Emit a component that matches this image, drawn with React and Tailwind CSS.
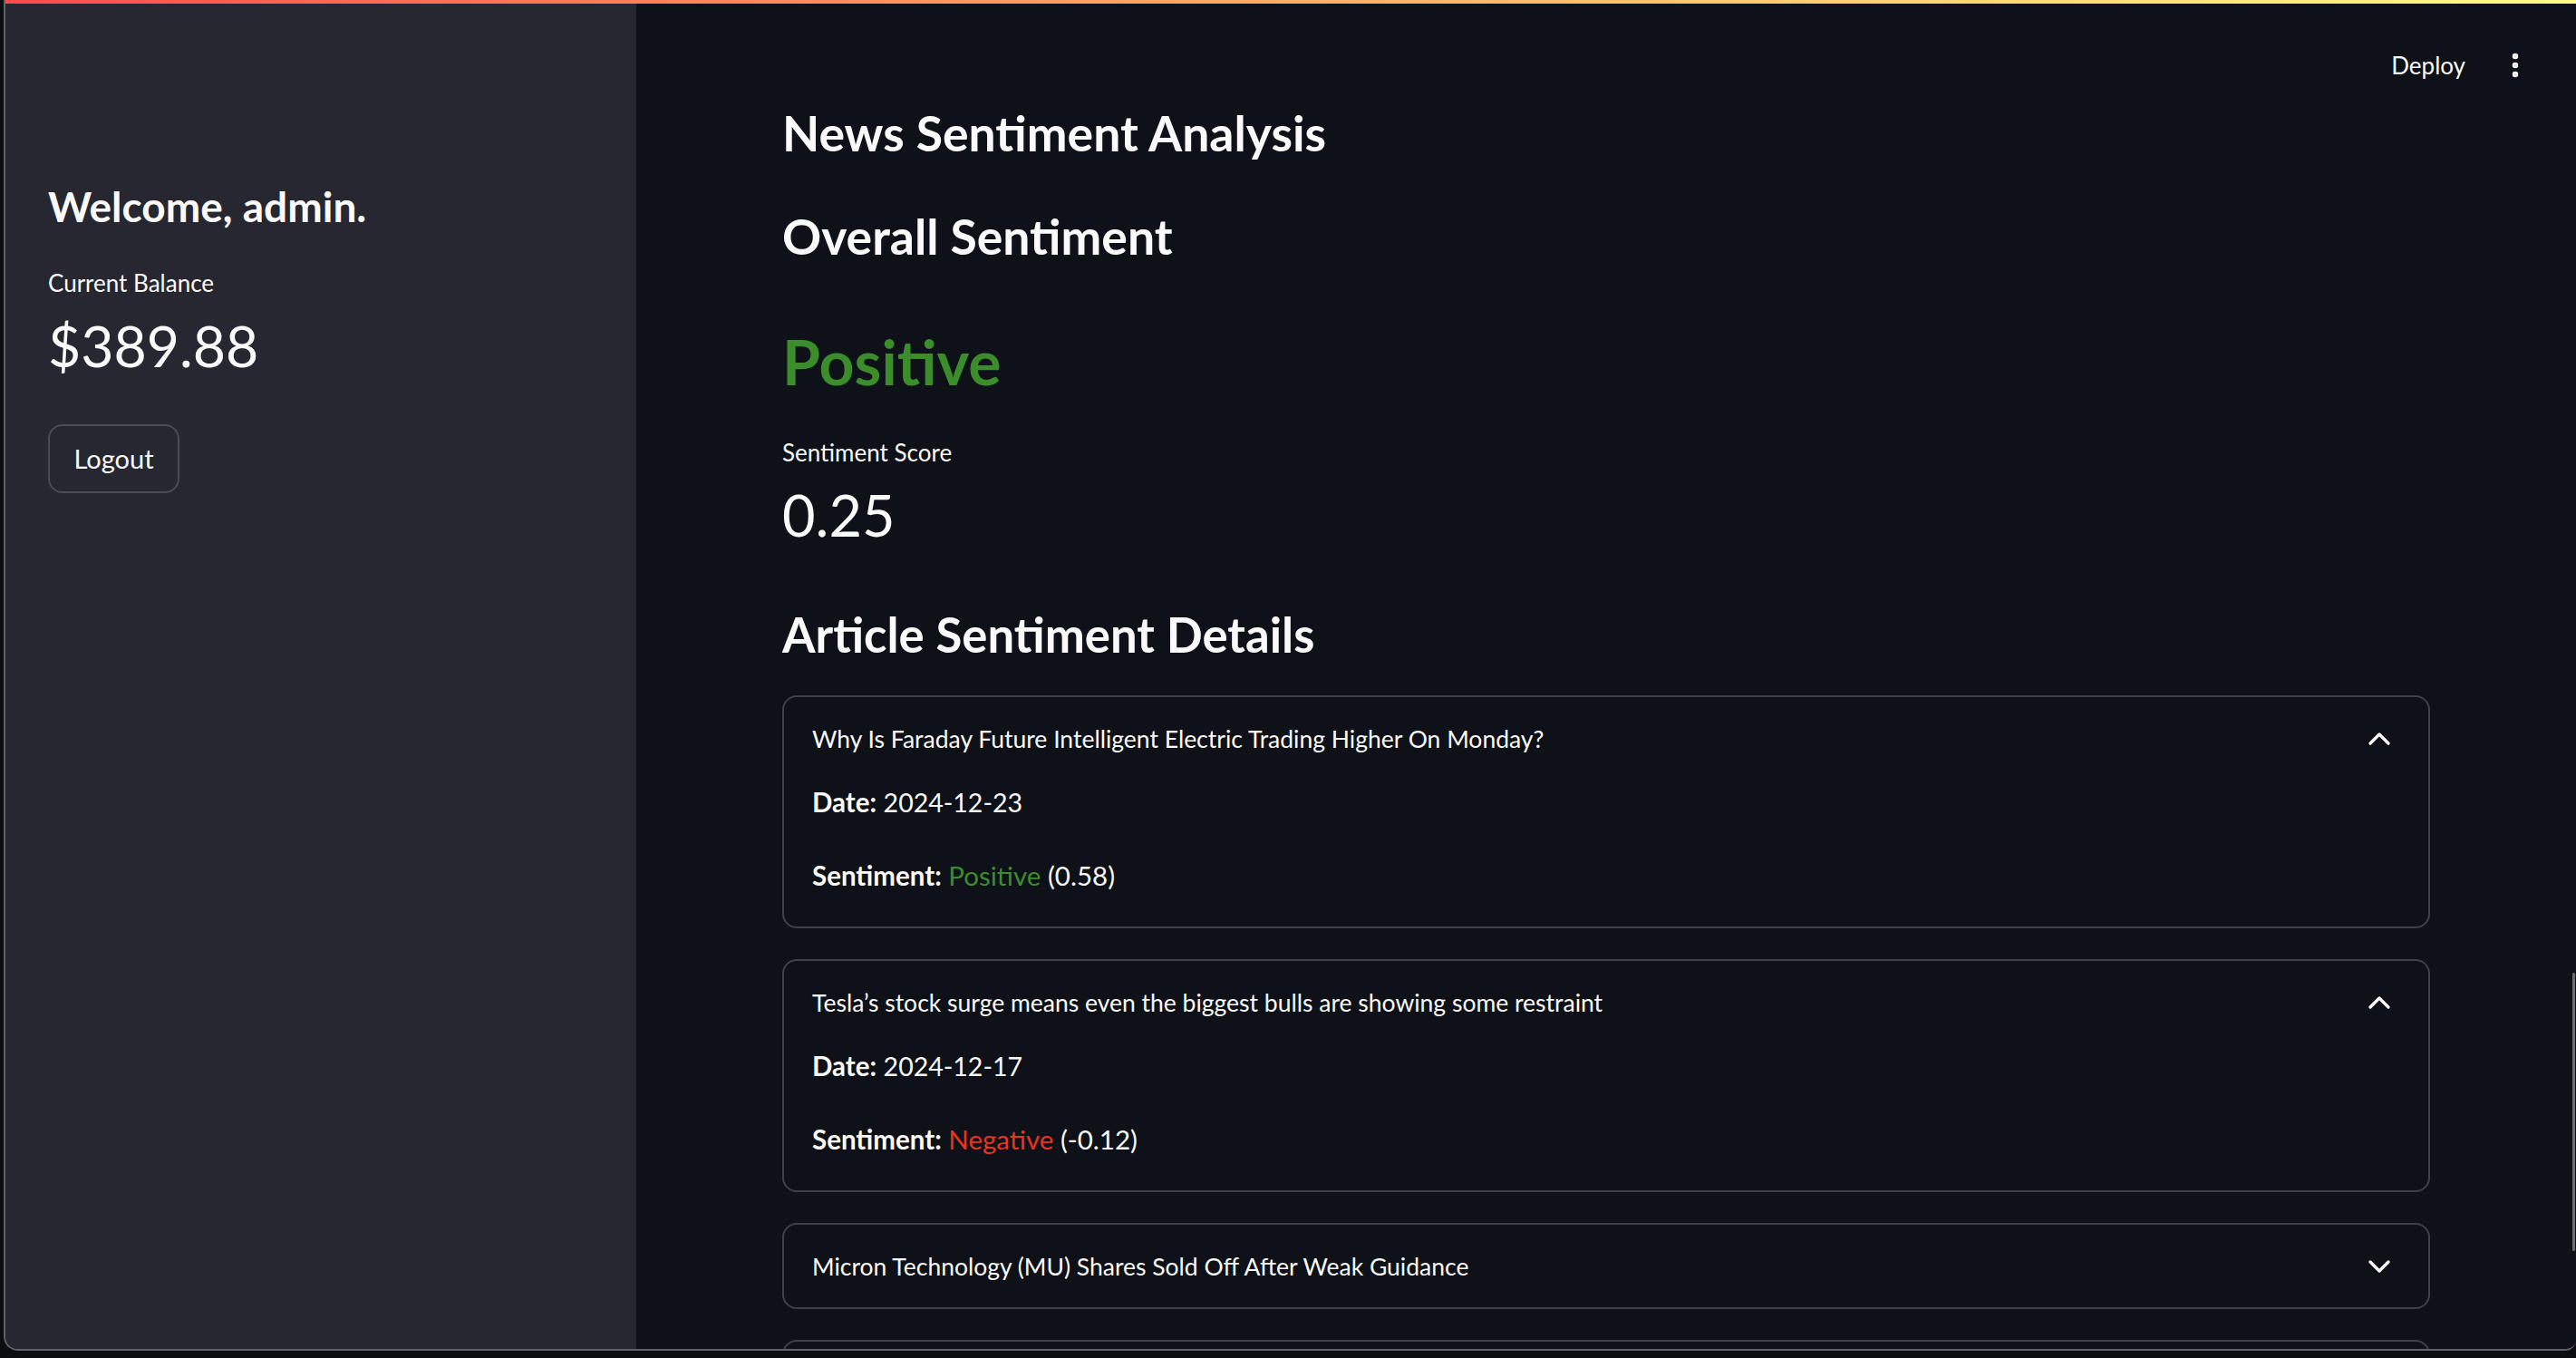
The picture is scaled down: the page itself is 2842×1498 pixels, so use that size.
import { ChevronUp, ChevronDown, EllipsisVertical } from "lucide-react";

const articles = [
    { title: "Why Is Faraday Future Intelligent Electric Trading Higher On Monday?", date: "2024-12-23", label: "Positive", score: "0.58", open: true },
    { title: "Tesla’s stock surge means even the biggest bulls are showing some restraint", date: "2024-12-17", label: "Negative", score: "-0.12", open: true },
    { title: "Micron Technology (MU) Shares Sold Off After Weak Guidance", open: false },
    { title: "", open: false },
];

const Expander = ({ item }) => {
    const Chevron = item.open ? ChevronUp : ChevronDown;
    return (
        <div className="border-2 border-[#3f4148] rounded-[16px] shrink-0">
            <div className="h-[91px] flex items-center justify-between pl-[31px] pr-[34px]">
                <span className="text-[26.5px] leading-[34px]">{item.title}</span>
                <Chevron size={40} strokeWidth={2} className="text-[#fafafa]" />
            </div>
            {item.open && (
                <div className="pl-[31px] pt-[5px] pb-[36px] text-[29.5px] leading-[40px]">
                    <p><span className="font-bold">Date:</span> <span className="text-[28.5px]">{item.date}</span></p>
                    <p className="mt-[41px]">
                        <span className="font-bold">Sentiment:</span>{" "}
                        <span className={item.label === "Positive" ? "text-[#3b8c2b]" : "text-[#e8351f]"}>{item.label}</span>{" "}
                        ({item.score})
                    </p>
                </div>
            )}
        </div>
    );
};

const App = () => {
    return (
        <div className="w-[2842px] h-[1498px] bg-[#0c0d10] pl-[4px] overflow-hidden font-[Lato,sans-serif] text-[#fafafa]">
            <div className="relative h-[1490px] flex rounded-bl-[16px] rounded-br-[12px] border-l-2 border-b-2 border-[#5f6069] overflow-hidden">
                <div className="absolute z-10 top-0 left-0 right-0 h-[4px] bg-gradient-to-r from-[#ff4b4b] to-[#fffd80]" />

                <aside className="w-[696px] shrink-0 bg-[#262730] pl-[47px] pt-[200px]">
                    <h3 className="text-[46px] leading-[56px] font-bold">Welcome, admin.</h3>
                    <div className="mt-[39px] text-[26px] leading-[34px]">Current Balance</div>
                    <div className="mt-[14px] text-[62.5px] leading-[76px]">$389.88</div>
                    <button className="mt-[49px] w-[145px] h-[76px] border-2 border-[#4a4b55] rounded-[16px] text-[29px] bg-[#262730]">
                        Logout
                    </button>
                </aside>

                <main className="relative flex-1 bg-[#0e1117] overflow-hidden">
                    <div className="absolute top-[52px] right-[50px] flex items-center gap-[38px]">
                        <span className="text-[26px] leading-[40px]">Deploy</span>
                        <EllipsisVertical size={34} strokeWidth={2.6} />
                    </div>
                    <div className="absolute right-[1px] top-[1073px] w-[3px] h-[307px] rounded-full bg-[#6b6c72]" />

                    <div className="w-[1818px] mx-auto pt-[114px] flex flex-col">
                        <h1 className="text-[53.5px] leading-[64px] font-bold">News Sentiment Analysis</h1>
                        <h2 className="mt-[50px] text-[53.5px] leading-[64px] font-bold">Overall Sentiment</h2>
                        <div className="mt-[67px] text-[68px] leading-[80px] font-bold text-[#3b8c2b]">Positive</div>
                        <div className="mt-[42px] text-[26px] leading-[36px]">Sentiment Score</div>
                        <div className="mt-[11px] text-[63px] leading-[80px]">0.25</div>
                        <h2 className="mt-[60px] text-[52.7px] leading-[64px] font-bold">Article Sentiment Details</h2>
                        <div className="mt-[35px] flex flex-col gap-[34px]">
                            {articles.map((a, i) => <Expander key={i} item={a} />)}
                        </div>
                    </div>
                </main>
            </div>
        </div>
    );
};

export default App;
